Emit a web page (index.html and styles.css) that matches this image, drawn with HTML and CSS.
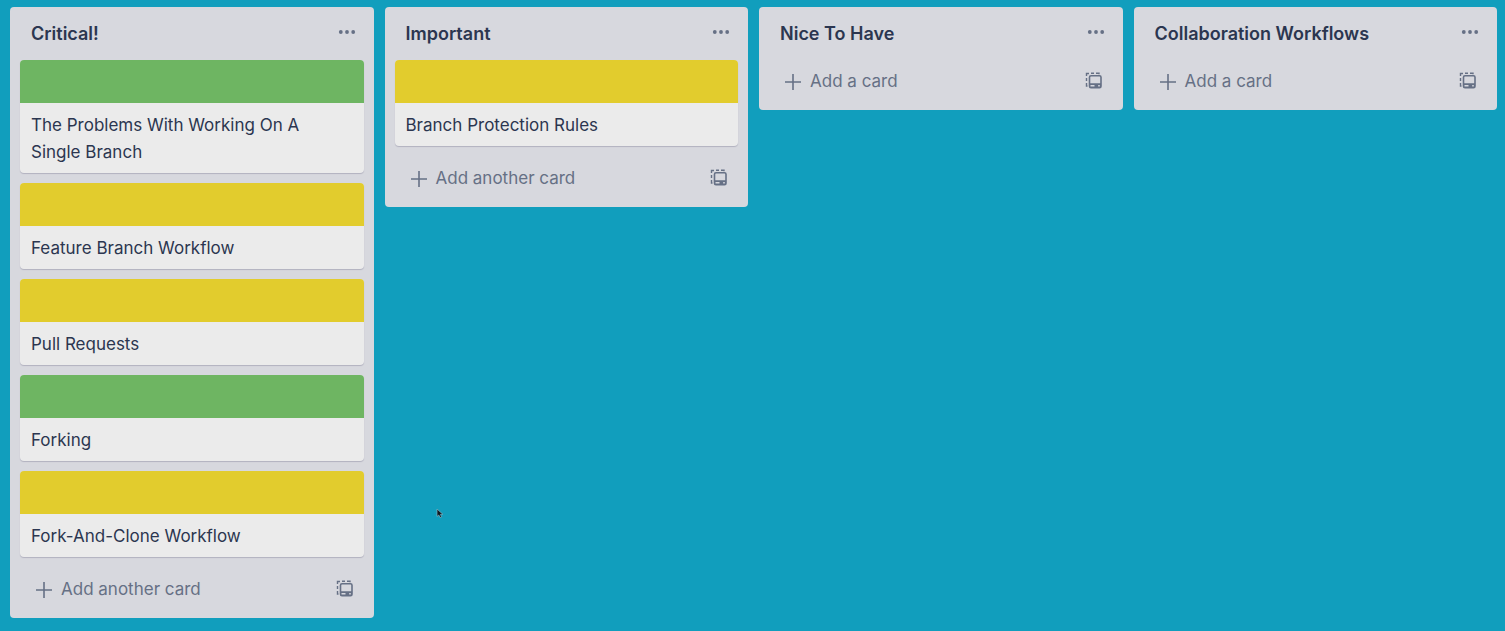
FILE: index.html
```html
<!DOCTYPE html>
<html lang="en">
<head>
<meta charset="utf-8">
<title>Board</title>
<link rel="stylesheet" href="styles.css">
</head>
<body>
<svg class="symbols" aria-hidden="true">
  <symbol id="dots" viewBox="0 0 18 6"><circle cx="2.800" cy="3" r="1.900"/><circle cx="9" cy="3" r="1.900"/><circle cx="15.200" cy="3" r="1.900"/></symbol>
  <symbol id="plus" viewBox="0 0 16 16"><path d="M8 0v16M0 8h16" fill="none" stroke="currentColor" stroke-width="1.6"/></symbol>
  <symbol id="template" viewBox="0 0 18 18"><path d="M1.500 4V1.500h2.500M6 1.300h3M11 1.300h3v1M1.500 6v3M1.500 11v3h1" fill="none" stroke="currentColor" stroke-width="1.4"/><path fill-rule="evenodd" d="M6 3h8.500a2.300 2.300 0 0 1 2.300 2.300v8.900a2.300 2.300 0 0 1-2.300 2.300H6a2.300 2.300 0 0 1-2.300-2.300V5.300A2.300 2.300 0 0 1 6 3zM6 4.600a.7.7 0 0 0-.7.700v6h9.900v-6a.7.7 0 0 0-.7-.7zM5.500 13.100v1.300h4v-1.300zM13.200 13.100v1.300h1.600v-1.300z"/></symbol>
</svg>
<main class="board">
  <section class="list">
    <header class="list-header"><h2 class="list-title">Critical!</h2><button class="icon-button" aria-label="List actions"><svg class="dots"><use href="#dots"/></svg></button></header>
    <div class="cards">
      <article class="card"><div class="cover green"></div><p class="card-title">The Problems With Working On A Single Branch</p></article>
      <article class="card"><div class="cover yellow"></div><p class="card-title">Feature Branch Workflow</p></article>
      <article class="card"><div class="cover yellow"></div><p class="card-title">Pull Requests</p></article>
      <article class="card"><div class="cover green"></div><p class="card-title">Forking</p></article>
      <article class="card"><div class="cover yellow"></div><p class="card-title">Fork-And-Clone Workflow</p></article>
    </div>
    <footer class="list-footer"><button class="add-button"><svg class="plus"><use href="#plus"/></svg>Add another card</button><button class="icon-button" aria-label="Create from template"><svg class="template"><use href="#template"/></svg></button></footer>
  </section>
  <section class="list">
    <header class="list-header"><h2 class="list-title">Important</h2><button class="icon-button" aria-label="List actions"><svg class="dots"><use href="#dots"/></svg></button></header>
    <div class="cards">
      <article class="card"><div class="cover yellow"></div><p class="card-title">Branch Protection Rules</p></article>
    </div>
    <footer class="list-footer"><button class="add-button"><svg class="plus"><use href="#plus"/></svg>Add another card</button><button class="icon-button" aria-label="Create from template"><svg class="template"><use href="#template"/></svg></button></footer>
  </section>
  <section class="list">
    <header class="list-header"><h2 class="list-title">Nice To Have</h2><button class="icon-button" aria-label="List actions"><svg class="dots"><use href="#dots"/></svg></button></header>
    <footer class="list-footer"><button class="add-button"><svg class="plus"><use href="#plus"/></svg>Add a card</button><button class="icon-button" aria-label="Create from template"><svg class="template"><use href="#template"/></svg></button></footer>
  </section>
  <section class="list">
    <header class="list-header"><h2 class="list-title">Collaboration Workflows</h2><button class="icon-button" aria-label="List actions"><svg class="dots"><use href="#dots"/></svg></button></header>
    <footer class="list-footer"><button class="add-button"><svg class="plus"><use href="#plus"/></svg>Add a card</button><button class="icon-button" aria-label="Create from template"><svg class="template"><use href="#template"/></svg></button></footer>
  </section>
  <svg class="pointer" viewBox="0 0 8 11" aria-hidden="true"><path d="M1 1v7.500l1.800-1.500 1.300 2.600 1.500-.8-1.200-2.400H7z" fill="#101820" stroke="#7fb4c4" stroke-width=".7"/></svg>
</main>
</body>
</html>
```
FILE: styles.css
```css
* { box-sizing: border-box; }

body {
  margin: 0;
  min-height: 100vh;
  background: #119ebd;
  color: #2b3650;
  font: 17px/27px Inter, "Liberation Sans", sans-serif;
}

.symbols { position: absolute; width: 0; height: 0; }

.board {
  position: relative;
  display: grid;
  grid-template-columns: repeat(4, minmax(0, 1fr));
  align-items: start;
  gap: 11px;
  padding: 7px 8px 12px 10px;
}

.list {
  background: #d7d8de;
  border-radius: 4px;
}

.list-header {
  display: flex;
  align-items: center;
  justify-content: space-between;
  height: 43px;
  padding: 10px 18px 0 21px;
}

.list-title {
  margin: 0;
  font-size: 18px;
  font-weight: 600;
  line-height: 27px;
}

button {
  display: flex;
  align-items: center;
  padding: 0;
  border: 0;
  background: none;
  color: #667085;
  font: inherit;
  cursor: pointer;
}

svg { display: block; fill: currentColor; }

.dots { width: 18px; height: 6px; }
.plus { width: 16px; height: 16px; }
.template { width: 18px; height: 18px; }

.list-header .icon-button { padding-bottom: 4px; }
.list-footer .icon-button { padding-top: 1px; }

.cards {
  display: flex;
  flex-direction: column;
  gap: 10px;
  padding: 10px 10px 1px;
}

.card {
  overflow: hidden;
  background: #ebebeb;
  border-radius: 4px;
  box-shadow: 0 1px 1px #b2b2bf;
}

.cover { height: 43px; }
.green { background: #6eb562; }
.yellow { background: #e2cc2d; }

.card-title {
  margin: 0;
  padding: 9px 11px 7px;
}

.list-footer {
  display: flex;
  align-items: center;
  justify-content: space-between;
  height: 60px;
  padding: 0 20px 0 26px;
}

.add-button { gap: 9px; padding-top: 3px; }

.pointer {
  position: absolute;
  left: 436px;
  top: 508px;
  width: 8px;
  height: 11px;
}
```
